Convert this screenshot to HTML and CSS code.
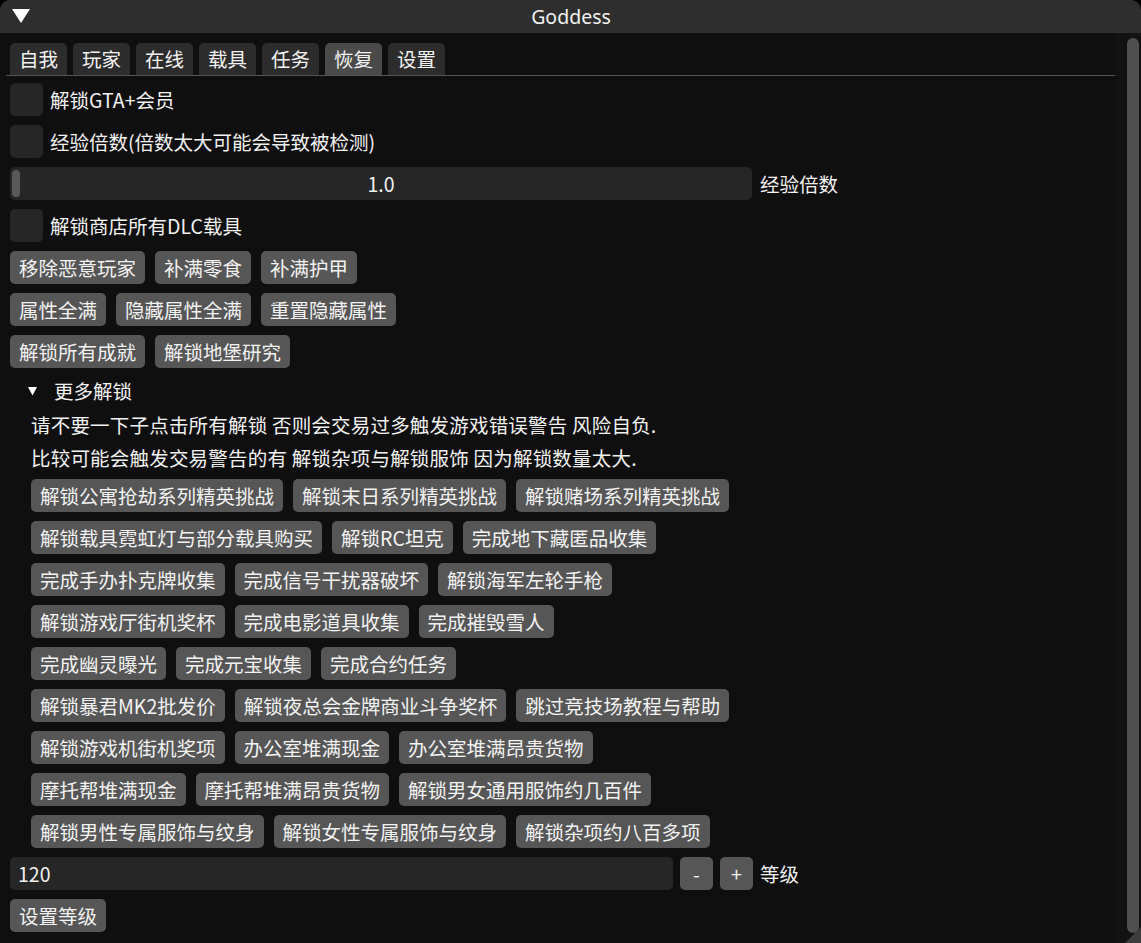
FILE: index.html
```html
<!DOCTYPE html>
<html lang="zh-CN">
<head>
<meta charset="utf-8">
<title>Goddess</title>
<link rel="stylesheet" href="styles.css">
</head>
<body>
<div class="window">
  <div class="titlebar">
    <svg class="collapse" width="20" height="16" viewBox="0 0 20 16"><polygon points="1,1 19,1 10,15" fill="#ffffff"/></svg>
    <span class="title">Goddess</span>
  </div>
  <div class="body">
    <div class="main">
      <div class="tabbar">
        <div class="tab">自我</div>
        <div class="tab">玩家</div>
        <div class="tab">在线</div>
        <div class="tab">载具</div>
        <div class="tab">任务</div>
        <div class="tab active">恢复</div>
        <div class="tab">设置</div>
      </div>
      <div class="tabline"></div>
      <div class="items">
        <div class="row"><span class="checkbox"></span><span class="label">解锁GTA+会员</span></div>
        <div class="row"><span class="checkbox"></span><span class="label">经验倍数(倍数太大可能会导致被检测)</span></div>
        <div class="row slider-row">
          <div class="slider"><span class="grab"></span><span class="value">1.0</span></div>
          <span class="label">经验倍数</span>
        </div>
        <div class="row"><span class="checkbox"></span><span class="label">解锁商店所有DLC载具</span></div>
        <div class="row btns"><div class="btn">移除恶意玩家</div><div class="btn">补满零食</div><div class="btn">补满护甲</div></div>
        <div class="row btns"><div class="btn">属性全满</div><div class="btn">隐藏属性全满</div><div class="btn">重置隐藏属性</div></div>
        <div class="row btns"><div class="btn">解锁所有成就</div><div class="btn">解锁地堡研究</div></div>
        <div class="tree">
          <svg class="arrow" width="9" height="9" viewBox="0 0 9 9"><polygon points="0,0 9,0 4.5,8.5" fill="#ffffff"/></svg>
          <span>更多解锁</span>
        </div>
        <div class="indent">
          <div class="text">请不要一下子点击所有解锁 否则会交易过多触发游戏错误警告 风险自负.</div>
          <div class="text">比较可能会触发交易警告的有 解锁杂项与解锁服饰 因为解锁数量太大.</div>
          <div class="row btns"><div class="btn">解锁公寓抢劫系列精英挑战</div><div class="btn">解锁末日系列精英挑战</div><div class="btn">解锁赌场系列精英挑战</div></div>
          <div class="row btns"><div class="btn">解锁载具霓虹灯与部分载具购买</div><div class="btn">解锁RC坦克</div><div class="btn">完成地下藏匿品收集</div></div>
          <div class="row btns"><div class="btn">完成手办扑克牌收集</div><div class="btn">完成信号干扰器破坏</div><div class="btn">解锁海军左轮手枪</div></div>
          <div class="row btns"><div class="btn">解锁游戏厅街机奖杯</div><div class="btn">完成电影道具收集</div><div class="btn">完成摧毁雪人</div></div>
          <div class="row btns"><div class="btn">完成幽灵曝光</div><div class="btn">完成元宝收集</div><div class="btn">完成合约任务</div></div>
          <div class="row btns"><div class="btn">解锁暴君MK2批发价</div><div class="btn">解锁夜总会金牌商业斗争奖杯</div><div class="btn">跳过竞技场教程与帮助</div></div>
          <div class="row btns"><div class="btn">解锁游戏机街机奖项</div><div class="btn">办公室堆满现金</div><div class="btn">办公室堆满昂贵货物</div></div>
          <div class="row btns"><div class="btn">摩托帮堆满现金</div><div class="btn">摩托帮堆满昂贵货物</div><div class="btn">解锁男女通用服饰约几百件</div></div>
          <div class="row btns"><div class="btn">解锁男性专属服饰与纹身</div><div class="btn">解锁女性专属服饰与纹身</div><div class="btn">解锁杂项约八百多项</div></div>
        </div>
        <div class="row level-row">
          <div class="input">120</div>
          <div class="btn small">-</div>
          <div class="btn small">+</div>
          <span class="label">等级</span>
        </div>
        <div class="row btns"><div class="btn">设置等级</div></div>
      </div>
    </div>
    <div class="scrollbar"><div class="thumb"></div></div>
  </div>
  <div class="grip"></div>
</div>
</body>
</html>
```
FILE: styles.css
```css
html, body {
  margin: 0;
  padding: 0;
  background: #000000;
}
body {
  font-family: "Noto Sans CJK SC", "Noto Sans", sans-serif;
  font-size: 19.5px;
  color: #f2f2f2;
}
.window {
  position: relative;
  width: 1141px;
  height: 943px;
  background: #0f0f0f;
  border-radius: 10px 10px 0 0;
  overflow: hidden;
  display: flex;
  flex-direction: column;
}
.titlebar {
  height: 33px;
  flex: 0 0 33px;
  background: #2e2e2e;
  position: relative;
  display: flex;
  align-items: center;
  justify-content: center;
}
.collapse {
  position: absolute;
  left: 11px;
  top: 8px;
}
.title {
  font-family: "Noto Sans", "Open Sans", sans-serif;
  font-size: 19.5px;
  line-height: 33px;
  color: #f2f2f2;
  margin-left: 1px;
}
.body {
  flex: 1;
  display: flex;
}
.main {
  width: 1115px;
  padding: 10px 0 0 10px;
  box-sizing: border-box;
}
.tabbar {
  display: flex;
  gap: 6px;
  height: 32px;
}
.tab {
  width: 57px;
  height: 32px;
  background: #2c2c2c;
  border-radius: 5px 5px 0 0;
  display: flex;
  align-items: center;
  justify-content: center;
  line-height: 20px;
}
.tab.active {
  background: #4a4a4a;
}
.tabline {
  height: 1px;
  background: #555555;
  margin-left: -4px;
  width: 1114px;
}
.items {
  display: flex;
  flex-direction: column;
  gap: 9px;
  margin-top: 7px;
}
.row {
  display: flex;
  align-items: center;
  gap: 10px;
  height: 33px;
}
.slider-row {
  gap: 8px;
}
.level-row {
  gap: 7px;
}
.checkbox {
  width: 33px;
  height: 33px;
  background: #262626;
  border-radius: 5px;
  margin-right: -3px;
}
.label {
  line-height: 33px;
  white-space: nowrap;
}
.slider {
  width: 742px;
  height: 33px;
  background: #262626;
  border-radius: 5px;
  position: relative;
  display: flex;
  align-items: center;
  justify-content: center;
}
.grab {
  position: absolute;
  left: 2px;
  top: 3px;
  width: 8px;
  height: 27px;
  background: #595959;
  border-radius: 4px;
}
.value {
  line-height: 33px;
}
.btn {
  height: 33px;
  padding: 0 9px;
  background: #565656;
  border-radius: 5px;
  display: flex;
  align-items: center;
  white-space: nowrap;
  line-height: 20px;
}
.btn.small {
  width: 33px;
  padding: 0;
  justify-content: center;
  box-sizing: border-box;
}
.tree {
  height: 27px;
  display: flex;
  align-items: center;
  padding-left: 18px;
  gap: 17px;
}
.arrow {
  margin-top: 1px;
}
.indent {
  display: flex;
  flex-direction: column;
  gap: 9px;
  padding-left: 21px;
}
.text {
  height: 24px;
  line-height: 24px;
  white-space: nowrap;
  letter-spacing: 0.2px;
}
.input {
  width: 663px;
  height: 33px;
  background: #262626;
  border-radius: 5px;
  box-sizing: border-box;
  padding-left: 8px;
  line-height: 33px;
}
.scrollbar {
  width: 26px;
  display: flex;
  justify-content: flex-end;
  padding-top: 5px;
  background: #121212;
}
.thumb {
  width: 12px;
  height: 895px;
  background: #4f4f4f;
  border-radius: 6px;
  margin-right: 2px;
}
.grip {
  position: absolute;
  right: 0;
  bottom: 0;
  width: 0;
  height: 0;
  border-left: 16px solid transparent;
  border-bottom: 16px solid #3c3c3c;
}
```
